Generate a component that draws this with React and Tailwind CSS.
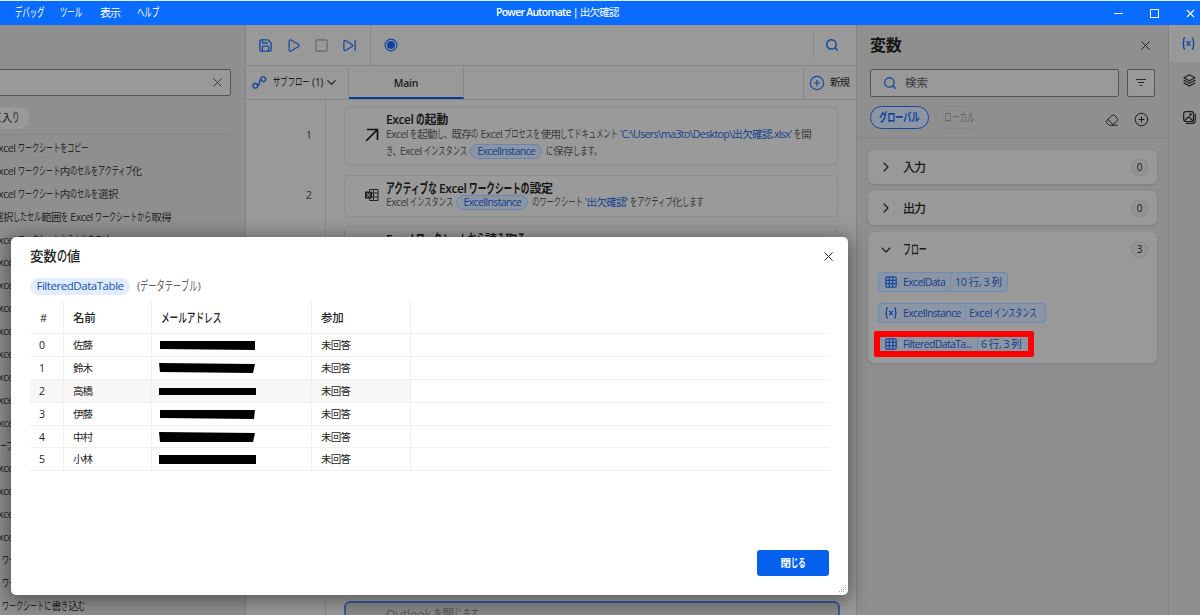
import { Save, Play, Square, SkipForward, Search, CirclePlus, X, Eraser, ChevronDown, ChevronRight } from "lucide-react";

const menus = [
  { text: "デバッグ", width: "w-[45px]" },
  { text: "ツール", width: "w-[40px]" },
  { text: "表示", width: "w-[37px] tracking-[-1px]" },
  { text: "ヘルプ", width: "w-[40px]" },
];

const actions = [
  { text: "Excel ワークシートをコピー" },
  { text: "Excel ワークシート内のセルをアクティブ化" },
  { text: "Excel ワークシート内のセルを選択" },
  { text: "選択したセル範囲を Excel ワークシートから取得" },
  { text: "Excel ワークシートからセルをコピー" },
  { text: "Excel ワークシートから削除" },
  { text: "Excel ワークシートに行を挿入" },
  { text: "Excel ワークシートから行を削除" },
  { text: "Excel ワークシートに列を挿入" },
  { text: "Excel ワークシートから列を削除" },
  { text: "Excel ワークシートで検索" },
  { text: "Excel ワークシートの名前を変更" },
  { text: "Excel ワークシートを削除" },
  { text: "ープを終了", offset: "ml-0" },
  { text: "Excel の起動" },
  { text: "Excel に添付" },
  { text: "Excel を閉じる" },
  { text: "Excel の保存" },
  { text: "ワークシートの追加", offset: "ml-[2px]" },
  { text: "ワークシートの取得", offset: "ml-[2px]" },
  { text: "ワークシートに書き込む", offset: "ml-[2px]" },
];

const rows = [
  { name: "佐藤", bar: "0,1 95,1 95,10 0,9" },
  { name: "鈴木", bar: "-1,0 95,1 93,10 0,9" },
  { name: "高橋", bar: "-1,2 96,2 96,9 -1,9" },
  { name: "伊藤", bar: "0,1 95,1 94,10 0,9" },
  { name: "中村", bar: "-1,0 95,1 93,10 0,10" },
  { name: "小林", bar: "-1,1 96,1 96,10 -1,10" },
];

// UI fonts set kana narrower than kanji, so every run of kana is condensed
function Jp({ children, scale = 0.69 }) {
  const ratio = scale / 1.12;
  return children.split(/([ぁ-ヿ、。]+)/).map((part, idx) =>
    idx % 2 ? (
      <span
        key={idx}
        className="inline-block origin-left text-[1.12em] leading-none tracking-normal"
        style={{ transform: `scaleX(${ratio})`, marginRight: `${-part.length * (1 - ratio)}em` }}
      >
        {part}
      </span>
    ) : (
      part
    )
  );
}

function SubflowIcon() {
  return (
    <svg className="shrink-0" width="15" height="14" viewBox="0 0 15 14" fill="none" stroke="#17489e" strokeWidth="1.4">
      <circle cx="3.3" cy="9.8" r="2.3" />
      <circle cx="11.3" cy="3.2" r="2.3" />
      <path d="M5.6 9.8c3 0 1-6.6 3.4-6.6" />
    </svg>
  );
}

function ExcelIcon() {
  return (
    <svg width="14" height="14" viewBox="0 0 14 14" fill="none" stroke="#222" strokeWidth="1">
      <path d="M4.5 3.5v-2h8.500v11H4.500v-2M8.500 1.500v11M4.500 5h8.500M4.500 9h8.500" />
      <rect x="0" y="3.500" width="7" height="7" fill="#222" stroke="none" />
      <path d="M2 5l3 4M5 5l-3 4" stroke="#999" />
    </svg>
  );
}

function GridIcon() {
  return (
    <svg width="12" height="12" viewBox="0 0 12 12" fill="none" stroke="#17489e" strokeWidth="1.2">
      <rect x="0.8" y="0.8" width="10.400" height="10.400" rx="1.500" />
      <path d="M4.300 1v10M7.700 1v10M1 4.300h10M1 7.700h10" />
    </svg>
  );
}

function VariableIcon({ size = 12 }) {
  return (
    <svg width={size} height={size} viewBox="0 0 12 12" fill="none" stroke="#17489e" strokeWidth="1.300">
      <path d="M3 .8c-1.300 0-1.500.6-1.500 1.700v2c0 .9-.3 1.500-1.100 1.500.8 0 1.100.6 1.100 1.500v2c0 1.100.2 1.700 1.500 1.700M9 .8c1.300 0 1.500.6 1.500 1.700v2c0 .9.3 1.500 1.100 1.500-.8 0-1.100.6-1.100 1.500v2c0 1.100-.2 1.700-1.500 1.700M4.200 3.800l3.600 4.400M7.800 3.800L4.200 8.200" />
    </svg>
  );
}

function FilterIcon() {
  return (
    <svg width="12" height="12" viewBox="0 0 12 12" fill="none" stroke="#2a2a2a" strokeWidth="1.100">
      <path d="M1 2.500h10M3 5.500h6M4.800 8.500h2.400" />
    </svg>
  );
}

function SearchIcon({ className }) {
  return <Search size={14} strokeWidth={2.400} className={`-scale-x-100 rotate-0 ${className}`} />;
}

function LayersIcon() {
  return (
    <svg className="mt-[12px] shrink-0" width="13" height="13" viewBox="0 0 13 13" fill="none" stroke="#1c1c1c" strokeWidth="1.200" strokeLinejoin="round" strokeLinecap="round">
      <path d="M6.500.8l5.500 3-5.500 3-5.500-3zM1 6.300l5.500 3 5.500-3M1 9l5.500 3L12 9" />
    </svg>
  );
}

function ImagesIcon() {
  return (
    <svg className="mt-[24px] shrink-0" width="13" height="13" viewBox="0 0 13 13" fill="none" stroke="#1c1c1c" strokeWidth="1.200" strokeLinejoin="round">
      <rect x=".7" y=".7" width="9.800" height="9.800" rx="2" />
      <path d="M1.500 9.800L5.600 5.800l4.200 4M12.300 3v6.500a2.800 2.800 0 0 1-2.800 2.800H3" />
      <circle cx="7.500" cy="3.600" r=".7" />
    </svg>
  );
}

function TitleBar() {
  return (
    <header className="flex h-[25px] shrink-0 items-center border-t border-[#d8f3ff] bg-[#0a6cff] text-[11px] text-white">
      <nav className="flex w-[496px] pl-[15px]">
        {menus.map((menu) => (
          <span key={menu.text} className={menu.width}>
            <Jp scale={0.67}>{menu.text}</Jp>
          </span>
        ))}
      </nav>
      <span className="grow text-[10.5px] font-semibold tracking-[-0.75px]">
        Power Automate | <span className="font-normal tracking-[-0.7px]">出欠確認</span>
      </span>
      <div className="flex w-[86px] items-center">
        <span className="h-px w-[9px] bg-white" />
        <span className="ml-[27px] size-[9px] border border-white" />
        <X size={13} strokeWidth={2} className="ml-[25px] shrink-0" />
      </div>
    </header>
  );
}

function ActionsPanel() {
  return (
    <aside className="flex w-[245px] shrink-0 flex-col overflow-hidden bg-[#8f8f8f] pt-[44px]">
      <div className="-ml-2 flex h-[27px] w-[239px] shrink-0 items-center justify-end rounded-[2px] border border-[#555] bg-[#999] pr-[5px]">
        <X size={15} strokeWidth={1.5} className="text-[#333]" />
      </div>
      <div className="mt-[11px] flex h-[22px] shrink-0">
        <span className="-ml-5 block w-[49px] rounded-full bg-[#999] pr-[9px] text-right text-[11px] leading-[21px] whitespace-nowrap">
          <Jp>に入り</Jp>
        </span>
      </div>
      <div className="mt-[5px] mb-[2px] h-px w-[231px] shrink-0 bg-[#868686]" />
      <ul className="text-[10.5px] whitespace-nowrap text-[#252525]">
        {actions.map((action, idx) => (
          <li key={idx} className="h-[22.9px] leading-[22px]">
            <span className={`${action.offset || "-ml-[7px]"} inline-block tracking-[-0.5px]`}>
              <Jp scale={0.67}>{action.text}</Jp>
            </span>
          </li>
        ))}
      </ul>
    </aside>
  );
}

function Toolbar() {
  return (
    <div className="flex h-[41px] shrink-0 items-center border-b border-[#878787] text-[#17489e]">
      <div className="flex h-full w-[125px] items-center gap-[13px] border-r border-[#898989] pl-[12px]">
        <Save size={15} strokeWidth={2.1} />
        <Play size={15} strokeWidth={2} />
        <Square size={15} strokeWidth={1.8} className="text-[#666]" />
        <SkipForward size={15} strokeWidth={2} />
      </div>
      <svg className="ml-[13px]" width="14" height="14" viewBox="0 0 14 14">
        <circle cx="7" cy="7" r="5.900" fill="none" stroke="#17489e" strokeWidth="1.200" />
        <circle cx="7" cy="7" r="4" fill="#0d45a5" />
      </svg>
      <div className="ml-auto flex h-[27px] w-[43px] items-center border-l border-[#888] pl-[11px]">
        <Search size={14} strokeWidth={2.600} />
      </div>
    </div>
  );
}

function Chip({ children }) {
  return (
    <span className="mx-[1.5px] inline-block h-[15px] w-[72px] rounded-full border border-[#6b85ad] bg-[#8c95a3] text-center text-[10.5px] leading-[13px] tracking-[-0.65px] text-[#123f8e]">
      {children}
    </span>
  );
}

function Step({ icon, title, className, children }) {
  return (
    <div className={`flex w-[494px] shrink-0 items-center rounded-[5px] border border-[#8e8e8e] bg-[#9a9a9a] ${className}`}>
      <div className="-mt-[2px] flex w-[41px] shrink-0 justify-end pr-[7px]">{icon}</div>
      <div className="min-w-0 text-[10.5px] leading-[15px] tracking-[-0.62px] whitespace-nowrap text-[#3b3b3b]">
        <h3 className="text-[12px] leading-[14px] font-semibold tracking-[-0.45px] text-[#151515]">
          <Jp scale={0.72}>{title}</Jp>
        </h3>
        {children}
      </div>
    </div>
  );
}

function Editor() {
  return (
    <main className="flex w-[611px] shrink-0 flex-col border-l border-[#838383] bg-[#999]">
      <Toolbar />
      <div className="flex h-[34px] shrink-0 border-b border-[#888] text-[11px]">
        <div className="flex w-[103px] items-center border-r border-[#888] pl-[6px]">
          <SubflowIcon />
          <span className="ml-[6px] w-[52px] text-[10.5px] tracking-[-0.4px] whitespace-nowrap">
            <Jp scale={0.7}>サブフロー (1)</Jp>
          </span>
          <ChevronDown size={15} strokeWidth={1.700} className="-ml-px shrink-0" />
        </div>
        <div className="flex h-[33px] w-[115px] items-center justify-center border-r border-b-2 border-r-[#888] border-b-[#073b93] pt-[4px] text-[10.5px] font-semibold tracking-[-0.2px]">Main</div>
        <div className="ml-auto flex w-[53px] items-center border-l border-[#888] pl-[5px]">
          <CirclePlus size={16} strokeWidth={1.700} className="shrink-0 text-[#17489e]" />
          <span className="ml-[5px] pt-[1px] text-[10.5px] tracking-[-0.9px] whitespace-nowrap">新規</span>
        </div>
      </div>
      <div className="flex grow">
        <div className="flex w-[80px] flex-col items-end border-r border-[#898989] pr-[13px] text-[11px] text-[#333]">
          <span className="mt-[27px]">1</span>
          <span className="mt-[43px]">2</span>
        </div>
        <div className="flex grow flex-col pt-[7px] pl-[18px]">
          <Step
            className="h-[58px]"
            title="Excel の起動"
            icon={
              <svg width="14" height="14" viewBox="0 0 14 14" fill="none" stroke="#111" strokeWidth="1.700">
                <path d="M1 13L12.500 1.500M2 1.500h10.500V12" />
              </svg>
            }
          >
            <p>
              <Jp>Excel を起動し、既存の Excel プロセスを使用してドキュメント </Jp>
              <span className="text-[#123f8e]">'C:\Users\ma3to\Desktop\出欠確認.xlsx'</span>
              <Jp> を開</Jp>
            </p>
            <p className="mt-[2px]">
              <Jp>き、Excel インスタンス </Jp>
              <Chip>ExcelInstance</Chip>
              <Jp> に保存します。</Jp>
            </p>
          </Step>
          <Step className="mt-[10px] h-[42px]" title="アクティブな Excel ワークシートの設定" icon={<ExcelIcon />}>
            <p className="-mt-px">
              <Jp>Excel インスタンス </Jp>
              <Chip>ExcelInstance</Chip>
              <Jp> のワークシート </Jp>
              <span className="text-[#123f8e]">'出欠確認'</span>
              <Jp> をアクティブ化します</Jp>
            </p>
          </Step>
          <Step className="mt-[9px] h-[42px]" title="Excel ワークシートから読み取る" icon={<ExcelIcon />}>
            <p>
              <Jp>セル範囲の値を読み取ります</Jp>
            </p>
          </Step>
          <div className="mt-[333px] h-10 w-[496px] rounded-[6px] border-2 border-[#315b9b] bg-[#888] pt-[5px] pl-[40px] text-[12px] leading-[14px] text-[#555]">
            <Jp>Outlook を閉じます</Jp>
          </div>
        </div>
      </div>
    </main>
  );
}

function Count({ children }) {
  return <span className="ml-auto flex size-[17px] items-center justify-center rounded-full border border-[#8a8a8a] bg-[#949494] text-[10px]">{children}</span>;
}

function VariableChip({ icon, name, value, className }) {
  return (
    <div className={`flex h-[20px] items-center rounded-[3px] border border-[#6b8bbb] bg-[#8c95a3] text-[10.5px] tracking-[-0.65px] whitespace-nowrap text-[#123f8e] ${className}`}>
      <span className="flex w-[24px] shrink-0 justify-center">{icon}</span>
      {name}
      {value}
    </div>
  );
}

function VariablesPanel() {
  return (
    <aside className="flex w-[312px] shrink-0 flex-col border-l border-[#838383] bg-[#8f8f8f]">
      <div className="flex h-[40px] items-center pr-[15px] pl-[13px]">
        <h2 className="text-[16px] font-semibold tracking-[-0.2px] text-[#151515]">変数</h2>
        <X size={15} strokeWidth={1.600} className="ml-auto text-[#222]" />
      </div>
      <div className="mt-[4px] flex h-[28px] gap-2 pl-[13px]">
        <div className="flex w-[249px] items-center rounded-[2px] border border-[#555] bg-[#999] pl-[12px] text-[11.500px] text-[#3b3b3b]">
          <Search size={14} strokeWidth={2.300} className="mr-[8px] text-[#17489e]" />
          検索
        </div>
        <div className="flex w-[28px] items-center justify-center rounded-[2px] border border-[#555] bg-[#999]">
          <FilterIcon />
        </div>
      </div>
      <div className="mt-[9px] flex h-[32px] items-start border-b border-[#868686] pr-[19px] pl-[13px] text-[11px] leading-[21px]">
        <span className="h-[23px] w-[59px] rounded-full border border-[#17489e] bg-[#8c95a3] pl-[8px] font-semibold whitespace-nowrap text-[#0c429b]">
          <Jp scale={0.74}>グローバル</Jp>
        </span>
        <span className="ml-[6px] h-[23px] w-[48px] rounded-full border border-[#898989] pl-[8px] whitespace-nowrap text-[#666]">
          <Jp scale={0.7}>ローカル</Jp>
        </span>
        <Eraser size={14} strokeWidth={1.700} className="mt-[7px] ml-auto" />
        <CirclePlus size={15} strokeWidth={1.600} className="mt-[6px] ml-[15px]" />
      </div>
      <div className="flex flex-col gap-[7px] pt-[12px] pl-[11px] text-[12px] text-[#171717]">
        {["入力", "出力"].map((name) => (
          <div key={name} className="flex h-[34px] w-[289px] items-center rounded-[6px] bg-[#999] pr-[9px] pl-[10px] shadow-sm">
            <ChevronRight size={16} strokeWidth={1.600} />
            <span className="ml-[9px] pt-[2px] font-medium tracking-[-0.9px]">{name}</span>
            <Count>0</Count>
          </div>
        ))}
        <div className="h-[131px] w-[289px] rounded-[6px] bg-[#999] shadow-sm">
          <div className="flex h-[35px] items-center pr-[9px] pl-[10px]">
            <ChevronDown size={16} strokeWidth={1.600} />
            <span className="ml-[9px] w-10 pt-[1px] font-medium">
              <Jp scale={0.66}>フロー</Jp>
            </span>
            <Count>3</Count>
          </div>
          <div className="flex flex-col gap-[11px] pt-[5px] pl-[10px]">
            <VariableChip
              className="w-[130px]"
              icon={<GridIcon />}
              name={<span className="w-[47px] shrink-0 pt-px">ExcelData</span>}
              value={<span className="h-full border-l border-[#6b8bbb] pl-[4px] leading-[19px] tracking-[-0.35px]">10 行, 3 列</span>}
            />
            <VariableChip
              className="w-[168px]"
              icon={<VariableIcon />}
              name={<span className="w-[62px] shrink-0 pt-px">ExcelInstance</span>}
              value={
                <span className="h-full border-l border-[#6b8bbb] pl-[3px] leading-[19px] tracking-[-0.4px]">
                  <Jp scale={0.68}>Excel インスタンス</Jp>
                </span>
              }
            />
            <div className="relative">
              <VariableChip
                className="w-[152px]"
                icon={<GridIcon />}
                name={<span className="w-[74px] shrink-0 pt-px">FilteredDataTa...</span>}
                value={<span className="h-full border-l border-[#6b8bbb] pl-[3px] leading-[19px] tracking-[-0.450px]">6 行, 3 列</span>}
              />
              <div className="absolute -top-[3px] -left-[4px] h-[26px] w-[160px] rounded-[2px] border-[6px] border-[#f00]" />
            </div>
          </div>
        </div>
      </div>
    </aside>
  );
}

function Rail() {
  return (
    <aside className="flex grow flex-col items-center border-l border-[#838383] bg-[#8f8f8f] pl-[9px]">
      <div className="-ml-[9px] flex h-[37px] w-[32px] shrink-0 items-center justify-end bg-[#999] pr-[6px]">
        <VariableIcon size={13} />
      </div>
      <LayersIcon />
      <ImagesIcon />
    </aside>
  );
}

function ValueDialog() {
  return (
    <div className="absolute top-[237px] left-[11px] flex h-[358px] w-[837px] flex-col rounded-[5px] bg-white pl-[19px] text-[#242424] shadow-[0_3px_18px_3px_rgba(0,0,0,0.4)]">
      <div className="flex h-[38px] items-center pr-[12px]">
        <h1 className="text-[13.500px] font-medium tracking-[-0.2px]">
          <Jp scale={0.75}>変数の値</Jp>
        </h1>
        <X size={15} strokeWidth={1.600} className="ml-auto" />
      </div>
      <div className="flex h-[22px] items-center text-[12px]">
        <span className="flex h-[17px] w-[100px] items-center justify-center rounded-full bg-[#e2ecff] text-[11.5px] tracking-[-0.450px] text-[#1450b8]">FilteredDataTable</span>
        <span className="ml-[7px] text-[11.500px] whitespace-nowrap text-[#616161]">
          <Jp scale={0.72}>(データテーブル)</Jp>
        </span>
      </div>
      <div className="mt-[4px] w-[800px] text-[10.5px]">
        <div className="flex h-[33px] border-b border-[#f0f0f0] text-[11.500px] leading-[33px] font-medium">
          <span className="w-[34px] border-r border-[#f0f0f0] pl-[10px] text-[11px]">#</span>
          <span className="w-[88px] border-r border-[#f0f0f0] pl-[9px] tracking-[-0.3px]">名前</span>
          <span className="w-[160px] border-r border-[#f0f0f0] pl-[9px]">
            <Jp scale={0.75}>メールアドレス</Jp>
          </span>
          <span className="w-[99px] border-r border-[#f0f0f0] pl-[9px] tracking-[-0.3px]">参加</span>
        </div>
        {rows.map((row, idx) => (
          <div key={row.name} className="flex h-[22.9px] border-b border-[#f0f0f0]">
            <div className={`flex leading-[23px] ${idx === 2 ? "bg-[#f8f7f6]" : ""}`}>
              <span className="w-[34px] border-r border-[#f0f0f0] pl-[9px]">{idx}</span>
              <span className="w-[88px] border-r border-[#f0f0f0] pl-[9px] tracking-[-0.900px]">{row.name}</span>
              <span className="flex w-[160px] items-center border-r border-[#f0f0f0] pl-[8px]">
                <svg width="96" height="10" className="overflow-visible" aria-hidden="true">
                  <polygon points={row.bar} fill="#000" />
                </svg>
              </span>
              <span className="w-[99px] border-r border-[#f0f0f0] pl-[9px] tracking-[-0.800px]">未回答</span>
            </div>
          </div>
        ))}
      </div>
      <button className="mt-auto mr-[19px] mb-[19px] h-[26px] w-[72px] self-end rounded-[3px] bg-[#0560ee] pt-[1px] text-[10.5px] font-bold text-white">
        <Jp scale={0.7}>閉じる</Jp>
      </button>
      <svg className="absolute right-[1px] bottom-[1px]" width="9" height="9" fill="#aaa">
        <path d="M7 0h1v1H7zM5 2h1v1H5zM7 2h1v1H7zM3 4h1v1H3zM5 4h1v1H5zM7 4h1v1H7zM1 6h1v1H1zM3 6h1v1H3zM5 6h1v1H5z" />
      </svg>
    </div>
  );
}

export default function App() {
  return (
    <div className="relative flex h-[615px] w-[1200px] flex-col overflow-hidden bg-[#8f8f8f] font-['Open_Sans','Noto_Sans_CJK_JP',sans-serif] text-[#1c1c1c]">
      <TitleBar />
      <div className="flex min-h-0 grow">
        <ActionsPanel />
        <Editor />
        <VariablesPanel />
        <Rail />
      </div>
      <ValueDialog />
    </div>
  );
}
